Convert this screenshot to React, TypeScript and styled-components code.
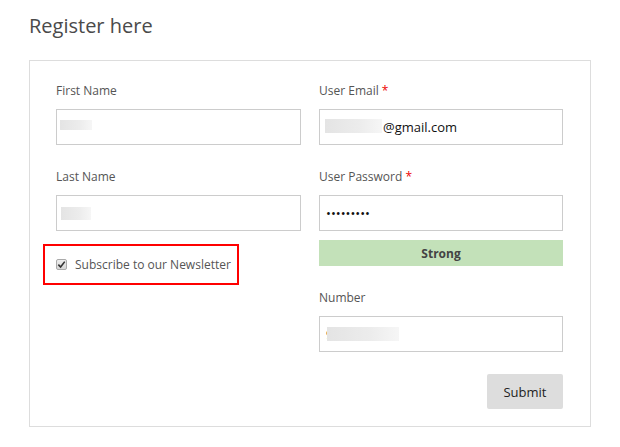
import styled, { createGlobalStyle } from 'styled-components'

const GlobalStyle = createGlobalStyle`
  body {
    margin: 0;
    background: #fff;
    font-family: 'Open Sans', 'Liberation Sans', sans-serif;
  }
`

const App = (): JSX.Element => {
  return (
    <>
      <GlobalStyle />
      <Page>
        <Title>Register here</Title>
        <Panel>
          <Column>
            <Field>
              <Label>First Name</Label>
              <InputWrap>
                <Input type='text' defaultValue='' />
                <Redact $left={4} $width={32} $top={11} $height={10} />
              </InputWrap>
            </Field>
            <Field>
              <Label>Last Name</Label>
              <InputWrap>
                <Input type='text' defaultValue='' />
                <Redact $left={5} $width={30} $top={12} $height={13} />
              </InputWrap>
            </Field>
            <NewsletterBox>
              <CheckLabel>
                <FakeCheck>
                  <svg width='9' height='9' viewBox='0 0 10 10'>
                    <path
                      d='M1.5 5.2 L4 7.8 L8.6 1.8'
                      fill='none'
                      stroke='#333'
                      strokeWidth='1.8'
                    />
                  </svg>
                </FakeCheck>
                Subscribe to our Newsletter
              </CheckLabel>
            </NewsletterBox>
          </Column>

          <Column>
            <Field>
              <Label>
                User Email <Req>*</Req>
              </Label>
              <InputWrap>
                <Input type='text' defaultValue='@gmail.com' $indent={57} />
                <Redact $left={6} $width={57} $top={10} $height={14} />
              </InputWrap>
            </Field>
            <Field $tight>
              <Label>
                User Password <Req>*</Req>
              </Label>
              <Input type='password' defaultValue='secretpwd' />
            </Field>
            <Strength>Strong</Strength>
            <Field>
              <Label>Number</Label>
              <InputWrap>
                <Input type='text' defaultValue='9' />
                <Redact $left={8} $width={72} $top={11} $height={14} />
              </InputWrap>
            </Field>
            <Actions>
              <SubmitButton type='button'>Submit</SubmitButton>
            </Actions>
          </Column>
        </Panel>
      </Page>
    </>
  )
}

export default App

const Page = styled.div`
  padding: 11px 29px 0 29px;
  width: 562px;
`

const Title = styled.h2`
  margin: 0 0 19px 0;
  font-size: 20px;
  font-weight: 400;
  line-height: 30px;
  color: #4a4a4a;
`

const Panel = styled.div`
  border: 1px solid #ddd;
  padding: 21px 27px 17px 26px;
  display: grid;
  grid-template-columns: 245px 244px;
  column-gap: 18px;
`

const Column = styled.div`
  display: flex;
  flex-direction: column;
`

const Field = styled.div<{ $tight?: boolean }>`
  display: flex;
  flex-direction: column;
  margin-bottom: ${p => (p.$tight ? '9px' : '23px')};
`

const Label = styled.label`
  font-size: 12px;
  line-height: 18px;
  color: #555;
  margin-bottom: 9px;
`

const Req = styled.span`
  color: #e00;
`

const InputWrap = styled.div`
  position: relative;
`

const Input = styled.input<{ $indent?: number }>`
  box-sizing: border-box;
  width: 100%;
  height: 36px;
  border: 1px solid #ccc;
  border-radius: 0;
  padding: 0 6px 0 ${p => 6 + (p.$indent || 0)}px;
  font-family: 'Open Sans', 'Liberation Sans', sans-serif;
  font-size: 13px;
  color: #111;
  background: #fff;
  outline: none;
`

const Redact = styled.span<{
  $left: number
  $width: number
  $top: number
  $height: number
}>`
  position: absolute;
  left: ${p => p.$left}px;
  top: ${p => p.$top}px;
  width: ${p => p.$width}px;
  height: ${p => p.$height}px;
  background: linear-gradient(90deg, #e4e4e4 0%, #ececec 60%, #f6f6f6 100%);
  filter: blur(0.6px);
`

const NewsletterBox = styled.div`
  margin: -10px 0 0 -13px;
  width: 196px;
  height: 41px;
  box-sizing: border-box;
  border: 2px solid #f00;
  display: flex;
  align-items: center;
  padding-left: 11px;
`

const CheckLabel = styled.label`
  display: flex;
  align-items: center;
  gap: 8px;
  font-size: 12px;
  color: #555;
`

const FakeCheck = styled.span`
  box-sizing: border-box;
  width: 11px;
  height: 11px;
  border: 1px solid #aaa;
  border-radius: 2px;
  background: linear-gradient(#eee, #d6d6d6);
  display: flex;
  align-items: center;
  justify-content: center;
`

const Strength = styled.div`
  height: 26px;
  background: #c3e1b9;
  color: #444;
  font-size: 12px;
  font-weight: 700;
  display: flex;
  align-items: center;
  justify-content: center;
  margin-bottom: 23px;
`

const Actions = styled.div`
  display: flex;
  justify-content: flex-end;
  margin-top: -1px;
`

const SubmitButton = styled.button`
  width: 76px;
  height: 35px;
  border: none;
  border-radius: 2px;
  background: #dddddd;
  color: #222;
  font-family: 'Open Sans', 'Liberation Sans', sans-serif;
  font-size: 13px;
  cursor: pointer;
`
